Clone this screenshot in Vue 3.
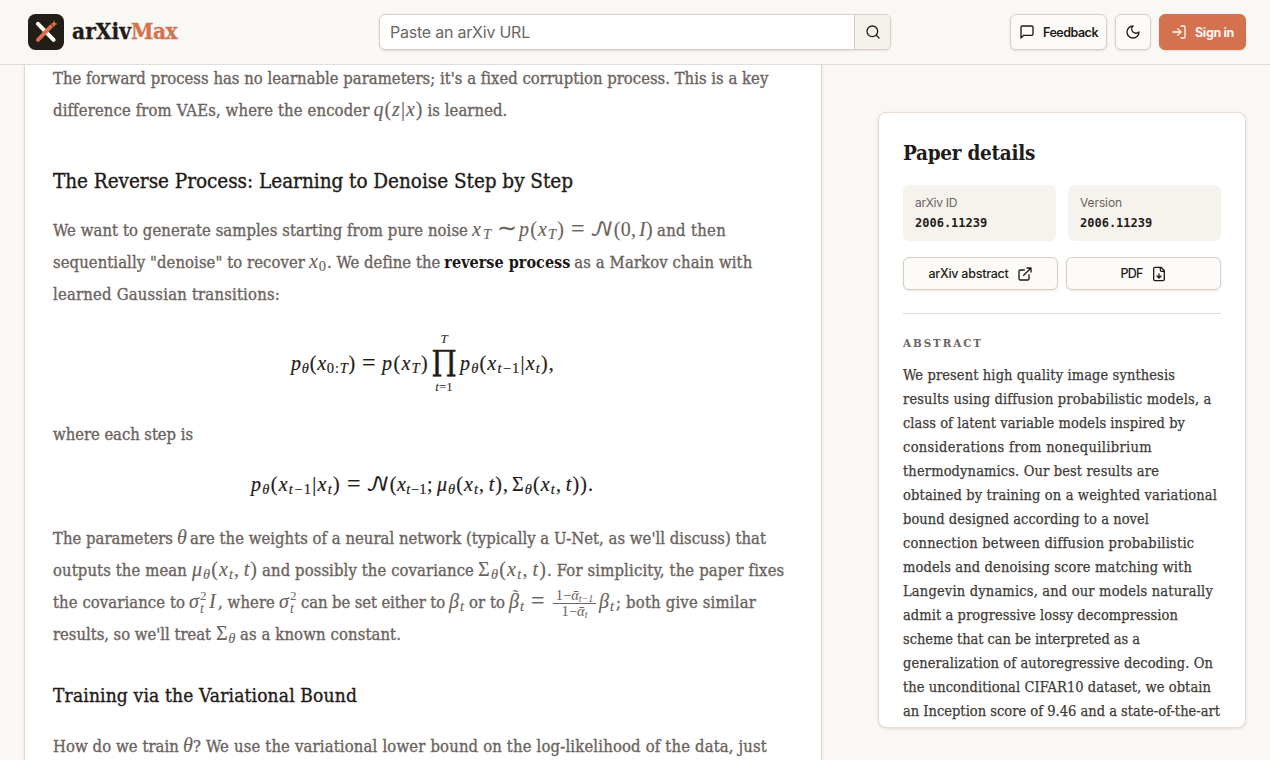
<template>
  <div class="page">
    <header class="topbar">
      <div class="brand">
        <svg class="logo" viewBox="0 0 36 36">
          <rect width="36" height="36" rx="7.5" fill="#231d17" />
          <path d="M10 9.8 25.6 25.8" stroke="#fffdf9" stroke-width="4" stroke-linecap="round" />
          <path d="M10 25.8 22.8 12.6" stroke="#d4714f" stroke-width="4" stroke-linecap="round" />
          <path d="M26 6.2 27 9l2.8 1-2.8 1-1 2.8-1-2.8-2.8-1 2.8-1z" fill="#e8714a" />
        </svg>
        <div class="wordmark">
          <span v-fit="59">arXiv</span><span v-fit="46" class="accent">Max</span>
        </div>
      </div>

      <div class="search">
        <div class="field"><span v-fit="140">Paste an arXiv URL</span></div>
        <button class="searchBtn" aria-label="Search">
          <svg class="icon" viewBox="0 0 24 24"><circle cx="11" cy="11" r="8" /><path d="m21 21-4.3-4.3" /></svg>
        </button>
      </div>

      <div class="actions">
        <button class="btn feedback">
          <svg class="icon" viewBox="0 0 24 24"><path d="M21 15a2 2 0 0 1-2 2H7l-4 4V5a2 2 0 0 1 2-2h14a2 2 0 0 1 2 2z" /></svg>
          <span v-fit="55">Feedback</span>
        </button>
        <button class="btn square" aria-label="Toggle theme">
          <svg class="icon" viewBox="0 0 24 24"><path d="M12 3a6 6 0 0 0 9 9 9 9 0 1 1-9-9Z" /></svg>
        </button>
        <button class="btn signin">
          <svg class="icon" viewBox="0 0 24 24"><path d="M15 3h4a2 2 0 0 1 2 2v14a2 2 0 0 1-2 2h-4M10 17l5-5-5-5M15 12H3" /></svg>
          <span v-fit="39">Sign in</span>
        </button>
      </div>
    </header>

    <main class="layout">
      <article class="article">
        <section v-for="(block, b) in blocks" :key="b" :class="block.kind">
          <div v-for="(line, l) in block.lines" :key="l" class="line">
            <template v-for="(seg, s) in line" :key="s">
              <span v-if="seg.type === 'prod'" class="prod" :style="{ marginLeft: seg.gap + 'px' }">
                <span class="limit"><i>T</i></span>
                <span class="big">∏</span>
                <span class="limit"><i>t</i>=1</span>
              </span>
              <span v-else-if="seg.type === 'frac'" class="frac" :style="{ marginLeft: seg.gap + 'px' }">
                <span class="num">1−<i>ᾱ</i><small>t−1</small></span>
                <span class="den">1−<i>ᾱ</i><small>t</small></span>
              </span>
              <span v-else-if="seg.type === 'stack'" class="stack">
                <span>2</span>
                <i>t</i>
              </span>
              <span
                v-else
                v-fit="seg.width"
                :class="[seg.type, { tilde: seg.tilde }]"
                :style="{ marginLeft: seg.gap + 'px' }"
              ><template v-if="seg.type !== 'math'">{{ seg.text }}</template><span
                v-for="(tok, k) in seg.type === 'math' ? tokens(seg.text) : []"
                :key="k"
                :class="tok.cls"
              >{{ tok.text }}</span></span>
            </template>
          </div>
        </section>
      </article>

      <aside class="details">
        <h2><span v-fit="132">Paper details</span></h2>
        <div class="meta">
          <div v-for="m in meta" :key="m.label" class="metaBox">
            <div class="label"><span v-fit="m.width">{{ m.label }}</span></div>
            <div class="value">{{ m.value }}</div>
          </div>
        </div>
        <div class="links">
          <button class="linkBtn">
            <span v-fit="80">arXiv abstract</span>
            <svg class="icon" viewBox="0 0 24 24"><path d="M15 3h6v6M10 14 21 3M18 13v6a2 2 0 0 1-2 2H5a2 2 0 0 1-2-2V8a2 2 0 0 1 2-2h6" /></svg>
          </button>
          <button class="linkBtn">
            <span v-fit="22">PDF</span>
            <svg class="icon" viewBox="0 0 24 24"><path d="M15 2H6a2 2 0 0 0-2 2v16a2 2 0 0 0 2 2h12a2 2 0 0 0 2-2V7Z M14 2v4a2 2 0 0 0 2 2h4M12 18v-6M9 15l3 3 3-3" /></svg>
          </button>
        </div>
        <hr />
        <h3><span v-fit="80">ABSTRACT</span></h3>
        <div class="abstract">
          <div v-for="row in abstract" :key="row[0]"><span v-fit="row[1]">{{ row[0] }}</span></div>
        </div>
      </aside>
    </main>
  </div>
</template>

<script setup>
// Sets a run of text to an exact measure by adjusting its tracking.
const vFit = {
  mounted(el, { value }) {
    const chars = [...el.textContent].length;
    const natural = el.getBoundingClientRect().width;
    el.style.letterSpacing = `${(value - natural) / chars}px`;
  }
};

// --- Segment helpers: text, width, gap before ---
const t = (text, width, gap = 0) => ({ type: "text", text, width, gap });
const m = (text, width, gap = 4) => ({ type: "math", text, width, gap });
const strong = (text, width, gap = 4) => ({ type: "strong", text, width, gap });

// Splits a formula into upright / italic / subscript runs
function tokens(src) {
  const out = [];
  const re = /_(?:\{([^}]*)\}|(.))|([\s\S])/gu;
  for (const match of src.matchAll(re)) {
    if (match[3]) {
      out.push({ text: match[3], cls: [kind(match[3])] });
      continue;
    }
    for (const ch of match[1] ?? match[2]) {
      out.push({ text: ch, cls: ["sub", kind(ch)] });
    }
  }
  return out;
}

function kind(ch) {
  if (ch === "𝒩") return "script";
  if (ch === " ") return "thin";
  if (ch === "=" || ch === "∼") return "rel";
  return /[a-zA-Zα-ω]/.test(ch) ? "it" : "up";
}

const blocks = [
  {
    kind: "para",
    lines: [
      [t("The forward process has no learnable parameters; it's a fixed corruption process. This is a key", 715)],
      [t("difference from VAEs, where the encoder", 316), m("q(z|x)", 50), t("is learned.", 80, 4)]
    ]
  },
  { kind: "h1", lines: [[t("The Reverse Process: Learning to Denoise Step by Step", 520)]] },
  {
    kind: "para",
    lines: [
      [
        t("We want to generate samples starting from pure noise", 415),
        m("x_T", 21), m("∼", 15, 4), m("p(x_T)", 46, 7), m("=", 14, 6), m("𝒩(0, I)", 63, 5),
        t("and then", 69, 4)
      ],
      [
        t("sequentially \"denoise\" to recover", 252), m("x_0", 18), t(". We define the", 113),
        strong("reverse process", 126), t("as a Markov chain with", 178, 4)
      ],
      [t("learned Gaussian transitions:", 227)]
    ]
  },
  {
    kind: "display tall",
    lines: [[
      m("p_θ(x_{0:T})", 65, 238), m("=", 14, 6), m("p(x_T)", 47, 6),
      { type: "prod", gap: 3 },
      m("p_θ(x_{t−1}|x_t),", 95, 4)
    ]]
  },
  { kind: "para", lines: [[t("where each step is", 140)]] },
  {
    kind: "display",
    lines: [[
      m("p_θ(x_{t−1}|x_t)", 90, 198), m("=", 14, 6), m("𝒩(x_{t−1};", 67, 5),
      m("μ_θ(x_t, t),", 72, 4), m("Σ_θ(x_t, t)).", 82, 3)
    ]]
  },
  {
    kind: "para",
    lines: [
      [t("The parameters", 120), m("θ", 9), t("are the weights of a neural network (typically a U-Net, as we'll discuss) that", 576, 4)],
      [
        t("outputs the mean", 134), m("μ_θ(x_t, t)", 66, 5), t("and possibly the covariance", 212, 4),
        m("Σ_θ(x_t, t)", 69), t(". For simplicity, the paper fixes", 237, 0)
      ],
      [
        t("the covariance to", 132), m("σ", 11), { type: "stack" }, m("I", 8, 2), t(", where", 57, 1),
        m("σ", 11), { type: "stack" }, t("can be set either to", 144, 4), m("β_t", 16), t("or to", 36, 4),
        { ...m("β_t", 16), tilde: true }, m("=", 14, 6), { type: "frac", gap: 8 },
        m("β_t", 16, 3), t("; both give similar", 140, 1)
      ],
      [t("results, so we'll treat", 158), m("Σ_θ", 20, 5), t("as a known constant.", 161, 4)]
    ]
  },
  { kind: "h2", lines: [[t("Training via the Variational Bound", 304)]] },
  {
    kind: "para",
    lines: [[
      t("How do we train", 126), m("θ", 10),
      t("? We use the variational lower bound on the log-likelihood of the data, just", 574, 0)
    ]]
  }
];

const meta = [
  { label: "arXiv ID", value: "2006.11239", width: 42 },
  { label: "Version", value: "2006.11239", width: 42 }
];

const abstract = [
  ["We present high quality image synthesis", 272],
  ["results using diffusion probabilistic models, a", 308],
  ["class of latent variable models inspired by", 282],
  ["considerations from nonequilibrium", 249],
  ["thermodynamics. Our best results are", 256],
  ["obtained by training on a weighted variational", 314],
  ["bound designed according to a novel", 246],
  ["connection between diffusion probabilistic", 291],
  ["models and denoising score matching with", 289],
  ["Langevin dynamics, and our models naturally", 310],
  ["admit a progressive lossy decompression", 275],
  ["scheme that can be interpreted as a", 237],
  ["generalization of autoregressive decoding. On", 310],
  ["the unconditional CIFAR10 dataset, we obtain", 308],
  ["an Inception score of 9.46 and a state-of-the-art", 317]
];
</script>

<style>
body { margin: 0; background: #fbf7f4; overflow: hidden; }
</style>

<style scoped>
.page { height: 760px; overflow: hidden; background: #fbf7f4; color: #1f1b18; font-family: Inter, sans-serif; }
.page * { box-sizing: border-box; }
span { white-space: pre; }
button { font: inherit; color: inherit; padding: 0; cursor: pointer; }

.topbar { position: relative; z-index: 2; height: 65px; display: grid; grid-template-columns: 351px 512px 1fr; align-items: start; padding: 14px 24px 0 28px; background: #faf8f4; border-bottom: 1px solid #e2dcd7; }
.brand { display: flex; gap: 8px; height: 36px; align-items: center; }
.logo { width: 36px; height: 36px; }
.wordmark { display: flex; padding-bottom: 2px; font: bold 22.5px/34px "DejaVu Serif Condensed", "DejaVu Serif", serif; font-stretch: condensed; -webkit-text-stroke: 0.3px currentColor; }
.accent { color: #d4714f; }
.search { display: flex; height: 36px; border: 1px solid #d9cec7; border-radius: 6px; background: #fff; overflow: hidden; box-shadow: 0 1px 2px rgba(60, 40, 30, 0.12); }
.field { flex: 1; padding-left: 10px; font-size: 16px; line-height: 35px; color: #6b6662; }
.searchBtn { width: 36px; border: 0; border-left: 1px solid #d9cec7; background: #f5f1eb; display: flex; align-items: center; justify-content: center; }
.icon { width: 16px; height: 16px; flex: none; fill: none; stroke: currentColor; stroke-width: 2; stroke-linecap: round; stroke-linejoin: round; }
.actions { display: flex; justify-content: flex-end; gap: 8px; }
.btn { height: 36px; border: 1px solid #d9cec7; border-radius: 6px; background: #fdfbf7; display: flex; align-items: center; font-size: 12.5px; font-weight: 600; box-shadow: 0 1px 2px rgba(60, 40, 30, 0.12); }
.feedback { width: 97px; padding-left: 8px; gap: 8px; }
.square { width: 36px; justify-content: center; }
.signin { width: 87px; padding-left: 11px; gap: 8px; background: #d4714f; border-color: #d4714f; color: #fff8f3; font-weight: 700; }

.layout { display: flex; align-items: flex-start; margin-top: -3px; padding: 0 24px; gap: 56px; }
.article { width: 798px; height: 720px; padding-left: 28px; background: #fff; border: solid #e4d9d0; border-width: 0 1px; box-shadow: 0 1px 3px rgba(60, 40, 30, 0.1); }
.line { display: flex; align-items: baseline; height: 32px; line-height: 34px; }
.para { font-family: "DejaVu Serif Condensed", "DejaVu Serif", serif; font-stretch: condensed; font-size: 16.5px; color: #6b635e; }
.text { -webkit-text-stroke: 0.35px currentColor; }
.strong { font-weight: bold; color: #1a1614; font-size: 16px; }
.h1 { font-family: "DejaVu Serif Condensed", "DejaVu Serif", serif; font-stretch: condensed; font-size: 20.5px; padding: 38px 0 18px; }
.h2 { font-family: "DejaVu Serif Condensed", "DejaVu Serif", serif; font-stretch: condensed; font-size: 19px; padding: 28px 0 20px; }
.display { height: 72px; padding-top: 18px; color: #1f1b18; }
.display.tall { height: 108px; padding-top: 37px; }
.display .math { line-height: 32px; -webkit-text-stroke: 0.2px currentColor; }

.math { font-family: "Liberation Serif", serif; font-size: 20px; line-height: 1px; -webkit-text-stroke: 0.15px currentColor; }
.it { font-style: italic; }
.thin { font-size: 10px; }
.rel { font-size: 24px; line-height: 1px; }
.script { font-family: "DejaVu Math TeX Gyre", "DejaVu Serif", serif; font-size: 21px; line-height: 1px; }
.sub { font-size: 14.5px; line-height: 1px; position: relative; top: 3px; }
/* accent above the first letter */
.tilde { position: relative; }
.tilde::before { content: "˜"; position: absolute; left: 4px; top: -11px; font-size: 15px; line-height: 10px; }

.prod { width: 24px; align-self: flex-start; display: flex; flex-direction: column; align-items: center; margin-top: -15px; }
.big { font: 25px/34px "DejaVu Math TeX Gyre", "Liberation Serif", serif; height: 34px; -webkit-text-stroke: 0.5px currentColor; }
.limit { font: 13px/14px "Liberation Serif", serif; height: 14px; }

.stack { width: 7px; align-self: flex-start; display: flex; flex-direction: column; font: 13px/12px "Liberation Serif", serif; margin-top: 4px; }
.stack i { font-size: 14px; line-height: 13px; }

.frac { width: 43px; align-self: flex-start; display: flex; flex-direction: column; align-items: center; font: 14.5px/16px "Liberation Serif", serif; margin-top: 1px; }
.num { width: 43px; height: 17px; text-align: center; border-bottom: 1px solid #6b635e; }
.den { height: 15px; line-height: 15px; }
.frac small { font-size: 10px; font-style: italic; line-height: 1px; position: relative; top: 2px; }

.details { width: 368px; height: 616px; margin-top: 50px; padding: 25px 24px 0; overflow: hidden; background: #fff; border: 1px solid #e6dad1; border-radius: 8px; box-shadow: 0 1px 3px rgba(60, 40, 30, 0.12); }
h2 { margin: 0 0 16px; font: bold 20.5px/31px "DejaVu Serif Condensed", "DejaVu Serif", serif; font-stretch: condensed; }
.meta { display: grid; grid-template-columns: 1fr 1fr; gap: 12px; }
.metaBox { height: 56px; padding: 8px 12px; border-radius: 6px; background: #f6f3ee; }
.label { font-size: 12px; line-height: 20px; color: #6b635e; }
.value { font: bold 12px/20px "DejaVu Sans Mono", monospace; }
.links { display: grid; grid-template-columns: 1fr 1fr; gap: 8px; margin-top: 16px; }
.linkBtn { height: 33px; display: flex; align-items: center; justify-content: center; gap: 8px; font-size: 12.5px; font-weight: 500; background: #fdfbf7; border: 1px solid #d9cec7; border-radius: 6px; box-shadow: 0 1px 2px rgba(60, 40, 30, 0.12); }
hr { height: 1px; margin: 23px 0; border: 0; background: #e4d9d0; }
h3 { margin: 0; font: bold 11.5px/12px "DejaVu Serif Condensed", "DejaVu Serif", serif; font-stretch: condensed; color: #6b635e; }
.abstract { margin-top: 14px; font: 14.5px/24px "DejaVu Serif Condensed", "DejaVu Serif", serif; font-stretch: condensed; color: #403b37; -webkit-text-stroke: 0.25px currentColor; }
</style>
